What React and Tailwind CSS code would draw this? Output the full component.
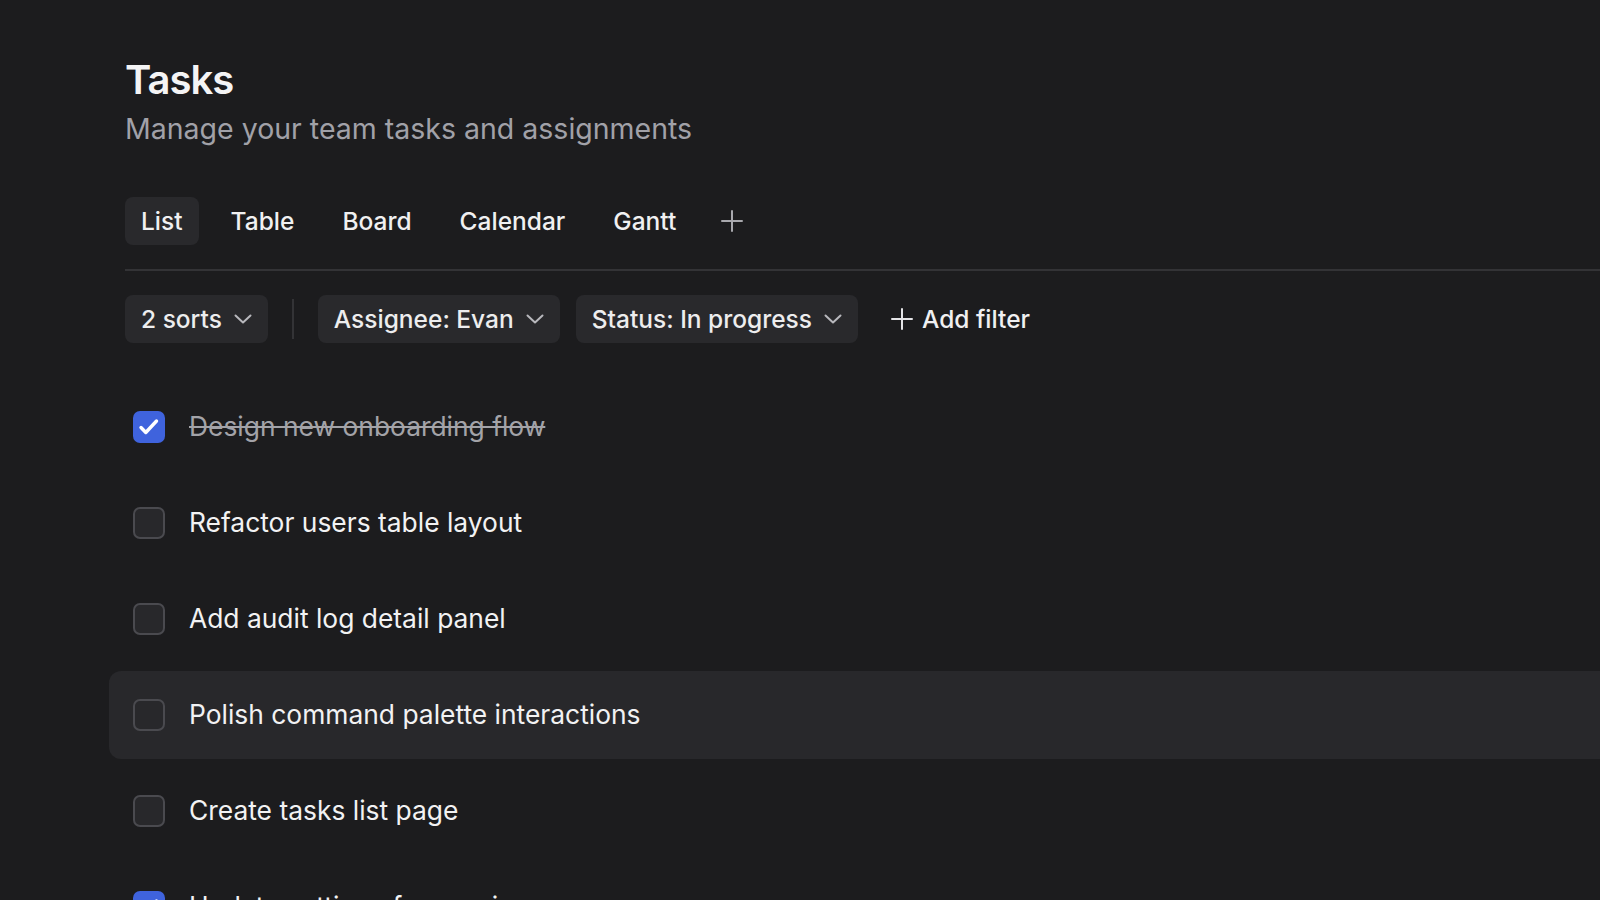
import { useState } from "react";

const tabs = ["List", "Table", "Board", "Calendar", "Gantt"];

const tasks = [
  { title: "Design new onboarding flow", done: true },
  { title: "Refactor users table layout", done: false },
  { title: "Add audit log detail panel", done: false },
  { title: "Polish command palette interactions", done: false, hover: true },
  { title: "Create tasks list page", done: false },
  { title: "Update settings for sessions", done: true },
];

function Chevron() {
  return (
    <svg width="18" height="10" viewBox="0 0 18 10" fill="none" className="shrink-0 text-[#b8b8bd]">
      <path d="M1.5 1.5l7.5 7 7.5-7" stroke="currentColor" strokeWidth="2" strokeLinecap="round" strokeLinejoin="round" />
    </svg>
  );
}

function Plus({ className }) {
  return (
    <svg width="24" height="24" viewBox="0 0 24 24" fill="none" className={className}>
      <path d="M12 2v20M2 12h20" stroke="currentColor" strokeWidth="2" strokeLinecap="round" />
    </svg>
  );
}

function Checkbox({ checked }) {
  if (checked) {
    return (
      <div className="h-8 w-8 shrink-0 rounded-[7px] bg-[#3f63dd]">
        <svg width="32" height="32" viewBox="0 0 32 32" fill="none">
          <path d="M8 16.5l4.8 5 10.7-11.5" stroke="white" strokeWidth="3.4" strokeLinecap="round" strokeLinejoin="round" />
        </svg>
      </div>
    );
  }
  return <div className="h-8 w-8 shrink-0 rounded-[7px] border-2 border-[#4a4a4f] bg-[#28282b]" />;
}

function FilterPill({ label }) {
  return (
    <button className="flex h-12 items-center gap-3 rounded-lg bg-[#29292c] px-4 text-[24.5px] font-medium text-[#ededee]">
      <span>{label}</span>
      <Chevron />
    </button>
  );
}

export default function App() {
  const [active, setActive] = useState("List");

  return (
    <div
      className="h-[900px] w-full overflow-hidden bg-[#1c1c1e] pl-[125px] pt-[56px] text-[#ededee]"
      style={{ fontFamily: "Inter, 'Noto Sans', sans-serif" }}
    >
      <h1 className="text-[40px] font-semibold leading-[48px] tracking-tight text-[#f4f4f5]">Tasks</h1>
      <p className="mt-[7px] text-[28.5px] leading-9 text-[#a1a1a8]">Manage your team tasks and assignments</p>

      <div className="mt-[50px] flex items-center gap-4">
        {tabs.map((t) => (
          <button
            key={t}
            onClick={() => setActive(t)}
            className={
              "h-12 rounded-lg px-4 text-[24.5px] font-medium text-[#f0f0f1] " +
              (active === t ? "bg-[#29292c]" : "")
            }
          >
            {t}
          </button>
        ))}
        <button className="flex h-12 w-12 items-center justify-center text-[#a8a8ad]">
          <Plus />
        </button>
      </div>

      <div className="mt-6 border-t-2 border-[#333336]" />

      <div className="mt-6 flex items-center">
        <FilterPill label="2 sorts" />
        <div className="mx-6 h-10 w-[2px] bg-[#333336]" />
        <div className="flex items-center gap-4">
          <FilterPill label="Assignee: Evan" />
          <FilterPill label="Status: In progress" />
          <button className="flex h-12 items-center gap-2 px-4 text-[24.5px] font-medium text-[#f0f0f1]">
            <Plus className="text-[#e4e4e7]" />
            <span>Add filter</span>
          </button>
        </div>
      </div>

      <ul className="-ml-4 mt-10 flex flex-col gap-2">
        {tasks.map((task, i) => (
          <li
            key={task.title}
            className={
              "flex h-[88px] items-center gap-6 rounded-l-xl px-6 " + (task.hover ? "bg-[#28282b]" : "")
            }
          >
            <Checkbox checked={task.done} />
            <span
              className={
                "text-[26.4px] " +
                (task.done && i === 0
                  ? "text-[#a3a3a8] line-through decoration-2"
                  : "text-[#f2f2f3]")
              }
            >
              {task.title}
            </span>
          </li>
        ))}
      </ul>
    </div>
  );
}
